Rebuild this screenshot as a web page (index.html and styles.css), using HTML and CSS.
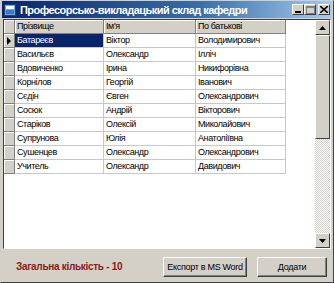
FILE: index.html
```html
<!DOCTYPE html>
<html lang="uk">
<head>
    <meta charset="UTF-8">
    <title>Професорсько-викладацький склад кафедри</title>
    <link rel="stylesheet" href="styles.css">
</head>
<body>
    <div class="window">
        <div class="titlebar">
            <svg class="app-icon" width="12" height="12" viewBox="0 0 12 12">
                <rect x="0.5" y="0.5" width="11" height="11" fill="#6fa8dc" stroke="#1c3f7a"/>
                <rect x="2" y="2" width="8" height="3" fill="#ffffff"/>
                <rect x="2" y="6" width="8" height="4" fill="#3d78c4"/>
            </svg>
            <span class="title">Професорсько-викладацький склад кафедри</span>
            <div class="controls">
                <span class="cbtn"><svg width="8" height="7" viewBox="0 0 8 7"><rect x="1" y="5" width="6" height="2" fill="#000"/></svg></span>
                <span class="cbtn"><svg width="9" height="8" viewBox="0 0 9 8"><rect x="0.5" y="0.5" width="8" height="7" fill="none" stroke="#808080"/><rect x="0.5" y="0.5" width="8" height="1.5" fill="#808080"/></svg></span>
                <span class="cbtn close"><svg width="8" height="7" viewBox="0 0 8 7"><path d="M0 0 L8 7 M8 0 L0 7" stroke="#000" stroke-width="1.6"/></svg></span>
            </div>
        </div>

        <div class="grid">
            <div class="table-wrap">
                <table>
                    <thead>
                        <tr>
                            <th class="ind"></th>
                            <th class="c1">Прізвище</th>
                            <th class="c2">Ім'я</th>
                            <th class="c3">По батькові</th>
                        </tr>
                    </thead>
                    <tbody>
                        <tr><td class="ind"><span class="arrow"></span></td><td class="sel">Батареєв</td><td>Віктор</td><td>Володимирович</td></tr>
                        <tr><td class="ind"></td><td>Васильєв</td><td>Олександр</td><td>Ілліч</td></tr>
                        <tr><td class="ind"></td><td>Вдовиченко</td><td>Ірина</td><td>Никифорівна</td></tr>
                        <tr><td class="ind"></td><td>Корнілов</td><td>Георгій</td><td>Іванович</td></tr>
                        <tr><td class="ind"></td><td>Сєдін</td><td>Євген</td><td>Олександрович</td></tr>
                        <tr><td class="ind"></td><td>Сосюк</td><td>Андрій</td><td>Вікторович</td></tr>
                        <tr><td class="ind"></td><td>Старіков</td><td>Олексій</td><td>Миколайович</td></tr>
                        <tr><td class="ind"></td><td>Супрунова</td><td>Юлія</td><td>Анатоліївна</td></tr>
                        <tr><td class="ind"></td><td>Сушенцев</td><td>Олександр</td><td>Олександрович</td></tr>
                        <tr><td class="ind"></td><td>Учитель</td><td>Олександр</td><td>Давидович</td></tr>
                    </tbody>
                </table>
            </div>
            <div class="scrollbar">
                <span class="sbtn"><svg width="7" height="4" viewBox="0 0 7 4"><path d="M3.5 0 L7 4 L0 4 Z" fill="#000"/></svg></span>
                <span class="thumb"></span>
                <span class="track"></span>
                <span class="sbtn"><svg width="7" height="4" viewBox="0 0 7 4"><path d="M0 0 L7 0 L3.5 4 Z" fill="#000"/></svg></span>
            </div>
        </div>

        <div class="footer">
            <span class="count">Загальна кількість - 10</span>
            <button class="btn export">Експорт в MS Word</button>
            <button class="btn add">Додати</button>
        </div>
    </div>
</body>
</html>
```

FILE: styles.css
```css
body {
    margin: 0;
    background-color: #ffffff;
    font-family: "Liberation Sans", Arial, sans-serif;
    font-size: 9px;
}
.window {
    width: 334px;
    height: 283px;
    box-sizing: border-box;
    background-color: #d4d0c8;
    border: 1px solid #404040;
    border-top-color: #d4d0c8;
    border-left-color: #d4d0c8;
    display: flex;
    flex-direction: column;
}
.titlebar {
    height: 17px;
    margin: 0 1px;
    display: flex;
    align-items: center;
    background: linear-gradient(to right, #0a246a, #3a6ea5 60%, #a6caf0);
    color: white;
}
.app-icon {
    margin: 0 4px 0 2px;
}
.title {
    font-weight: bold;
    font-size: 11px;
    letter-spacing: -0.55px;
    white-space: nowrap;
    flex: 1;
}
.controls {
    display: flex;
    margin-right: 2px;
}
.cbtn {
    width: 12px;
    height: 11px;
    box-sizing: border-box;
    background-color: #d4d0c8;
    border: 1px solid;
    border-color: #ffffff #404040 #404040 #ffffff;
    display: flex;
    align-items: center;
    justify-content: center;
}
.cbtn.close {
    margin-left: 2px;
}
.grid {
    height: 230px;
    margin: 1px 2px 0 2px;
    box-sizing: border-box;
    border: 1px solid;
    border-color: #404040 #ffffff #ffffff #404040;
    display: flex;
    background-color: #ffffff;
}
.table-wrap {
    flex: 1;
    background-color: #ffffff;
}
table {
    border-collapse: collapse;
    table-layout: fixed;
    width: 282px;
}
th, td {
    height: 13px;
    padding: 0 0 0 2px;
    text-align: left;
    font-weight: normal;
    white-space: nowrap;
    overflow: hidden;
    color: #000;
    line-height: 13px;
    letter-spacing: -0.4px;
}
th {
    background-color: #d4d0c8;
    border-right: 1px solid #808080;
    border-bottom: 1px solid #808080;
    box-shadow: inset 1px 1px 0 #ffffff;
}
td {
    border-right: 1px solid #c8c8c8;
    border-bottom: 1px solid #c8c8c8;
}
.ind {
    width: 10px;
    padding: 0;
    background-color: #d4d0c8;
    border-right: 1px solid #808080;
    border-bottom: 1px solid #808080;
    box-shadow: inset 1px 1px 0 #ffffff;
}
.c1 { width: 86px; }
.c2 { width: 89px; }
.c3 { width: 87px; }
.arrow {
    display: block;
    width: 0;
    height: 0;
    margin-left: 3px;
    border-top: 4px solid transparent;
    border-bottom: 4px solid transparent;
    border-left: 4px solid #000;
}
.sel {
    background-color: #0a246a;
    color: #ffffff;
}
.scrollbar {
    width: 15px;
    display: flex;
    flex-direction: column;
    background-color: #ece9e2;
}
.sbtn, .thumb {
    height: 15px;
    box-sizing: border-box;
    background-color: #d4d0c8;
    border: 1px solid;
    border-color: #ffffff #404040 #404040 #ffffff;
    display: flex;
    align-items: center;
    justify-content: center;
}
.thumb {
    height: 104px;
}
.track {
    flex: 1;
    background-image: repeating-conic-gradient(#ffffff 0 25%, #d4d0c8 0 50%);
    background-size: 2px 2px;
}
.footer {
    flex: 1;
    display: flex;
    align-items: center;
    padding: 2px 6px 0 15px;
}
.count {
    flex: 1;
    color: #8b1a1a;
    font-weight: bold;
    font-size: 10px;
    letter-spacing: -0.3px;
}
.btn {
    height: 20px;
    margin-left: 10px;
    padding: 0;
    box-sizing: border-box;
    background-color: #d4d0c8;
    font-family: "Liberation Sans", Arial, sans-serif;
    font-size: 9px;
    letter-spacing: -0.3px;
    white-space: nowrap;
    color: #000;
    border: 1px solid;
    border-color: #ffffff #404040 #404040 #ffffff;
    box-shadow: inset -1px -1px 0 #808080;
}
.export { width: 84px; }
.add { width: 70px; }
```
